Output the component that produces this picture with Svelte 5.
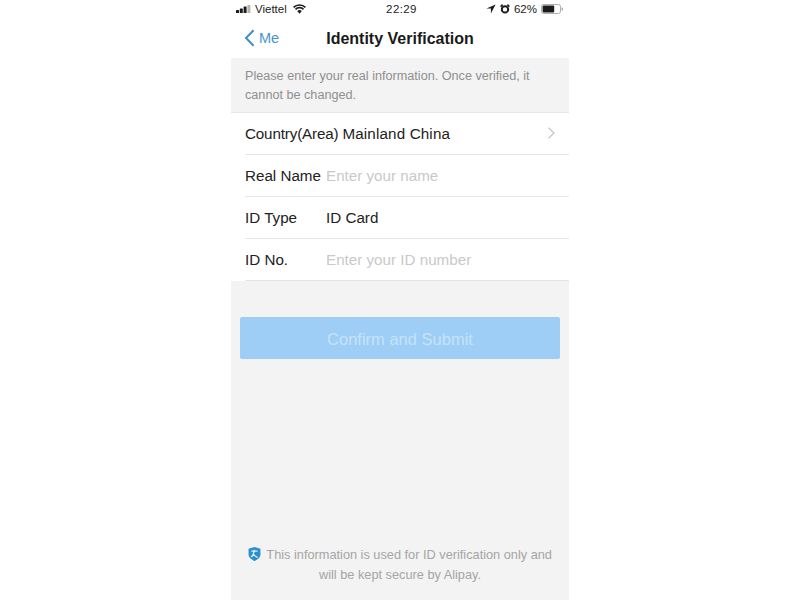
<script>
  const rows = [
    { label: 'Country(Area)', value: 'Mainland China', chevron: true },
    { label: 'Real Name', placeholder: 'Enter your name' },
    { label: 'ID Type', value: 'ID Card' },
    { label: 'ID No.', placeholder: 'Enter your ID number' }
  ];
</script>

<div class="page">
  <div class="phone">
    <div class="status">
      <div class="status-left">
        <svg class="signal" width="15" height="8" viewBox="0 0 15 8">
          <rect x="0" y="5" width="3" height="3" rx="0.5" fill="#1c1c1c" />
          <rect x="3.800" y="3.400" width="3" height="4.600" rx="0.5" fill="#1c1c1c" />
          <rect x="7.600" y="1.600" width="3" height="6.400" rx="0.5" fill="#1c1c1c" />
          <rect x="11.400" y="0" width="3" height="8" rx="0.5" fill="#b4b4b4" />
        </svg>
        <span>Viettel</span>
        <svg class="wifi" width="13" height="10" viewBox="0 0 13 10">
          <path d="M0.600 3.400a8.400 8.400 0 0 1 11.800 0M2.500 5.400a5.600 5.600 0 0 1 8 0" fill="none" stroke="#1c1c1c" stroke-width="1.700" />
          <path d="M4.200 7a3.300 3.300 0 0 1 4.600 0L6.500 9.800z" fill="#1c1c1c" />
        </svg>
      </div>
      <div class="time">22:29</div>
      <div class="status-right">
        <svg width="10" height="10" viewBox="0 0 10 10"><path d="M9.600 0.400 0.400 4.600h4.500v4.800z" fill="#1c1c1c" /></svg>
        <svg width="10" height="10" viewBox="0 0 10 10">
          <circle cx="5" cy="5.400" r="3.200" fill="#fff" stroke="#1c1c1c" stroke-width="2" />
          <path d="M0.600 2.600 2.600 0.600M9.400 2.600 7.400 0.600" stroke="#1c1c1c" stroke-width="1.500" />
        </svg>
        <span>62%</span>
        <svg width="23" height="10" viewBox="0 0 23 10">
          <rect x="0.500" y="0.500" width="19" height="9" rx="2" fill="none" stroke="#999" stroke-width="0.800" />
          <rect x="1.600" y="1.600" width="11.600" height="6.800" rx="1" fill="#1c1c1c" />
          <rect x="20.600" y="3.400" width="1.200" height="3.200" rx="0.500" fill="#999" />
        </svg>
      </div>
    </div>

    <div class="nav">
      <div class="back">
        <svg width="11" height="18" viewBox="0 0 11 18">
          <path d="M9.600 1.200 2 9l7.600 7.800" fill="none" stroke="#3f8fc6" stroke-width="2" />
        </svg>
        <span>Me</span>
      </div>
      <div class="title">Identity Verification</div>
    </div>

    <div class="notice">Please enter your real information. Once verified, it cannot be changed.</div>

    <div class="form">
      {#each rows as row}
        <div class="row">
          <span class="label">{row.label}</span>
          {#if row.value}
            <span class="value">{row.value}</span>
          {:else}
            <span class="placeholder">{row.placeholder}</span>
          {/if}
          {#if row.chevron}
            <svg class="chevron" width="9" height="14" viewBox="0 0 9 14">
              <path d="M1.400 1.600 7 7l-5.600 5.400" fill="none" stroke="#c4c4c4" stroke-width="1.300" />
            </svg>
          {/if}
        </div>
      {/each}
    </div>

    <div class="button">Confirm and Submit</div>

    <div class="footer">
      <div>
        <svg class="shield" width="13" height="16" viewBox="0 0 14 16">
          <path d="M7 0.400 13.400 2.400v6.200c0 3-3 5.400-6.400 7C3.600 14 0.600 11.600 0.600 8.600V2.400z" fill="#2b8fcb" />
          <path d="M3.600 5h6.600M7 3.400C6.400 7 5.400 9.600 3.400 11.400M5.400 7.400c1 2 2.600 3.400 5 4.200" fill="none" stroke="#dff0fa" stroke-width="1.300" />
        </svg>
        This information is used for ID verification only and
      </div>
      <div>will be kept secure by Alipay.</div>
    </div>
  </div>
</div>

<style>
  :global(body) {
    margin: 0;
    background: #fff;
  }
  .page {
    display: flex;
    justify-content: center;
    width: 800px;
    height: 600px;
    overflow: hidden;
    font-family: "Liberation Sans", Arial, sans-serif;
  }
  .phone {
    width: 338px;
    height: 600px;
    background: #f3f3f3;
    display: flex;
    flex-direction: column;
  }
  .status {
    height: 18px;
    background: #fff;
    display: grid;
    grid-template-columns: 1fr auto 1fr;
    align-items: center;
    padding: 0 5px;
    font-size: 11.500px;
    color: #222;
  }
  .status-left,
  .status-right {
    display: flex;
    align-items: center;
    gap: 4px;
  }
  .wifi {
    margin-left: 2px;
  }
  .status-right {
    justify-content: flex-end;
  }
  .time {
    font-size: 11.500px;
    letter-spacing: 0.400px;
    margin-left: 3px;
  }
  .nav {
    height: 40px;
    background: #fff;
    display: flex;
    align-items: center;
    justify-content: center;
    position: relative;
  }
  .back {
    position: absolute;
    left: 13px;
    top: 11px;
    display: flex;
    align-items: center;
    gap: 4px;
    color: #4a94c8;
    font-size: 14.500px;
  }
  .title {
    font-size: 16px;
    font-weight: bold;
    color: #1a1a1a;
    padding-top: 2px;
  }
  .notice {
    height: 55px;
    box-sizing: border-box;
    padding: 9px 30px 0 14px;
    font-size: 12.650px;
    line-height: 19px;
    color: #8f8f8f;
  }
  .form {
    background: #fff;
    padding-left: 14px;
    box-shadow: 0 -1px 0 #e6e6e6;
  }
  .row {
    height: 42px;
    box-sizing: border-box;
    border-bottom: 1px solid #e6e6e6;
    display: flex;
    align-items: center;
    font-size: 15.200px;
    color: #222;
    padding-right: 13px;
    padding-bottom: 1px;
  }
  .label {
    min-width: 81px;
    white-space: nowrap;
  }
  .row:first-child .label {
    letter-spacing: -0.150px;
  }
  .row:first-child .value {
    margin-left: 4px;
    letter-spacing: 0.150px;
  }
  .placeholder {
    color: #c9c9c9;
  }
  .chevron {
    margin-left: auto;
  }
  .button {
    margin: 36px 9px 0 9px;
    height: 42px;
    box-sizing: border-box;
    padding-top: 3px;
    background: #9ecdf6;
    border-radius: 2px;
    color: #c5e3fa;
    font-size: 16.500px;
    display: flex;
    align-items: center;
    justify-content: center;
  }
  .footer {
    margin-top: auto;
    padding-bottom: 15px;
    text-align: center;
    font-size: 12.750px;
    line-height: 20px;
    color: #a5a5a5;
  }
  .shield {
    vertical-align: -3px;
    margin-right: 2px;
  }
</style>
